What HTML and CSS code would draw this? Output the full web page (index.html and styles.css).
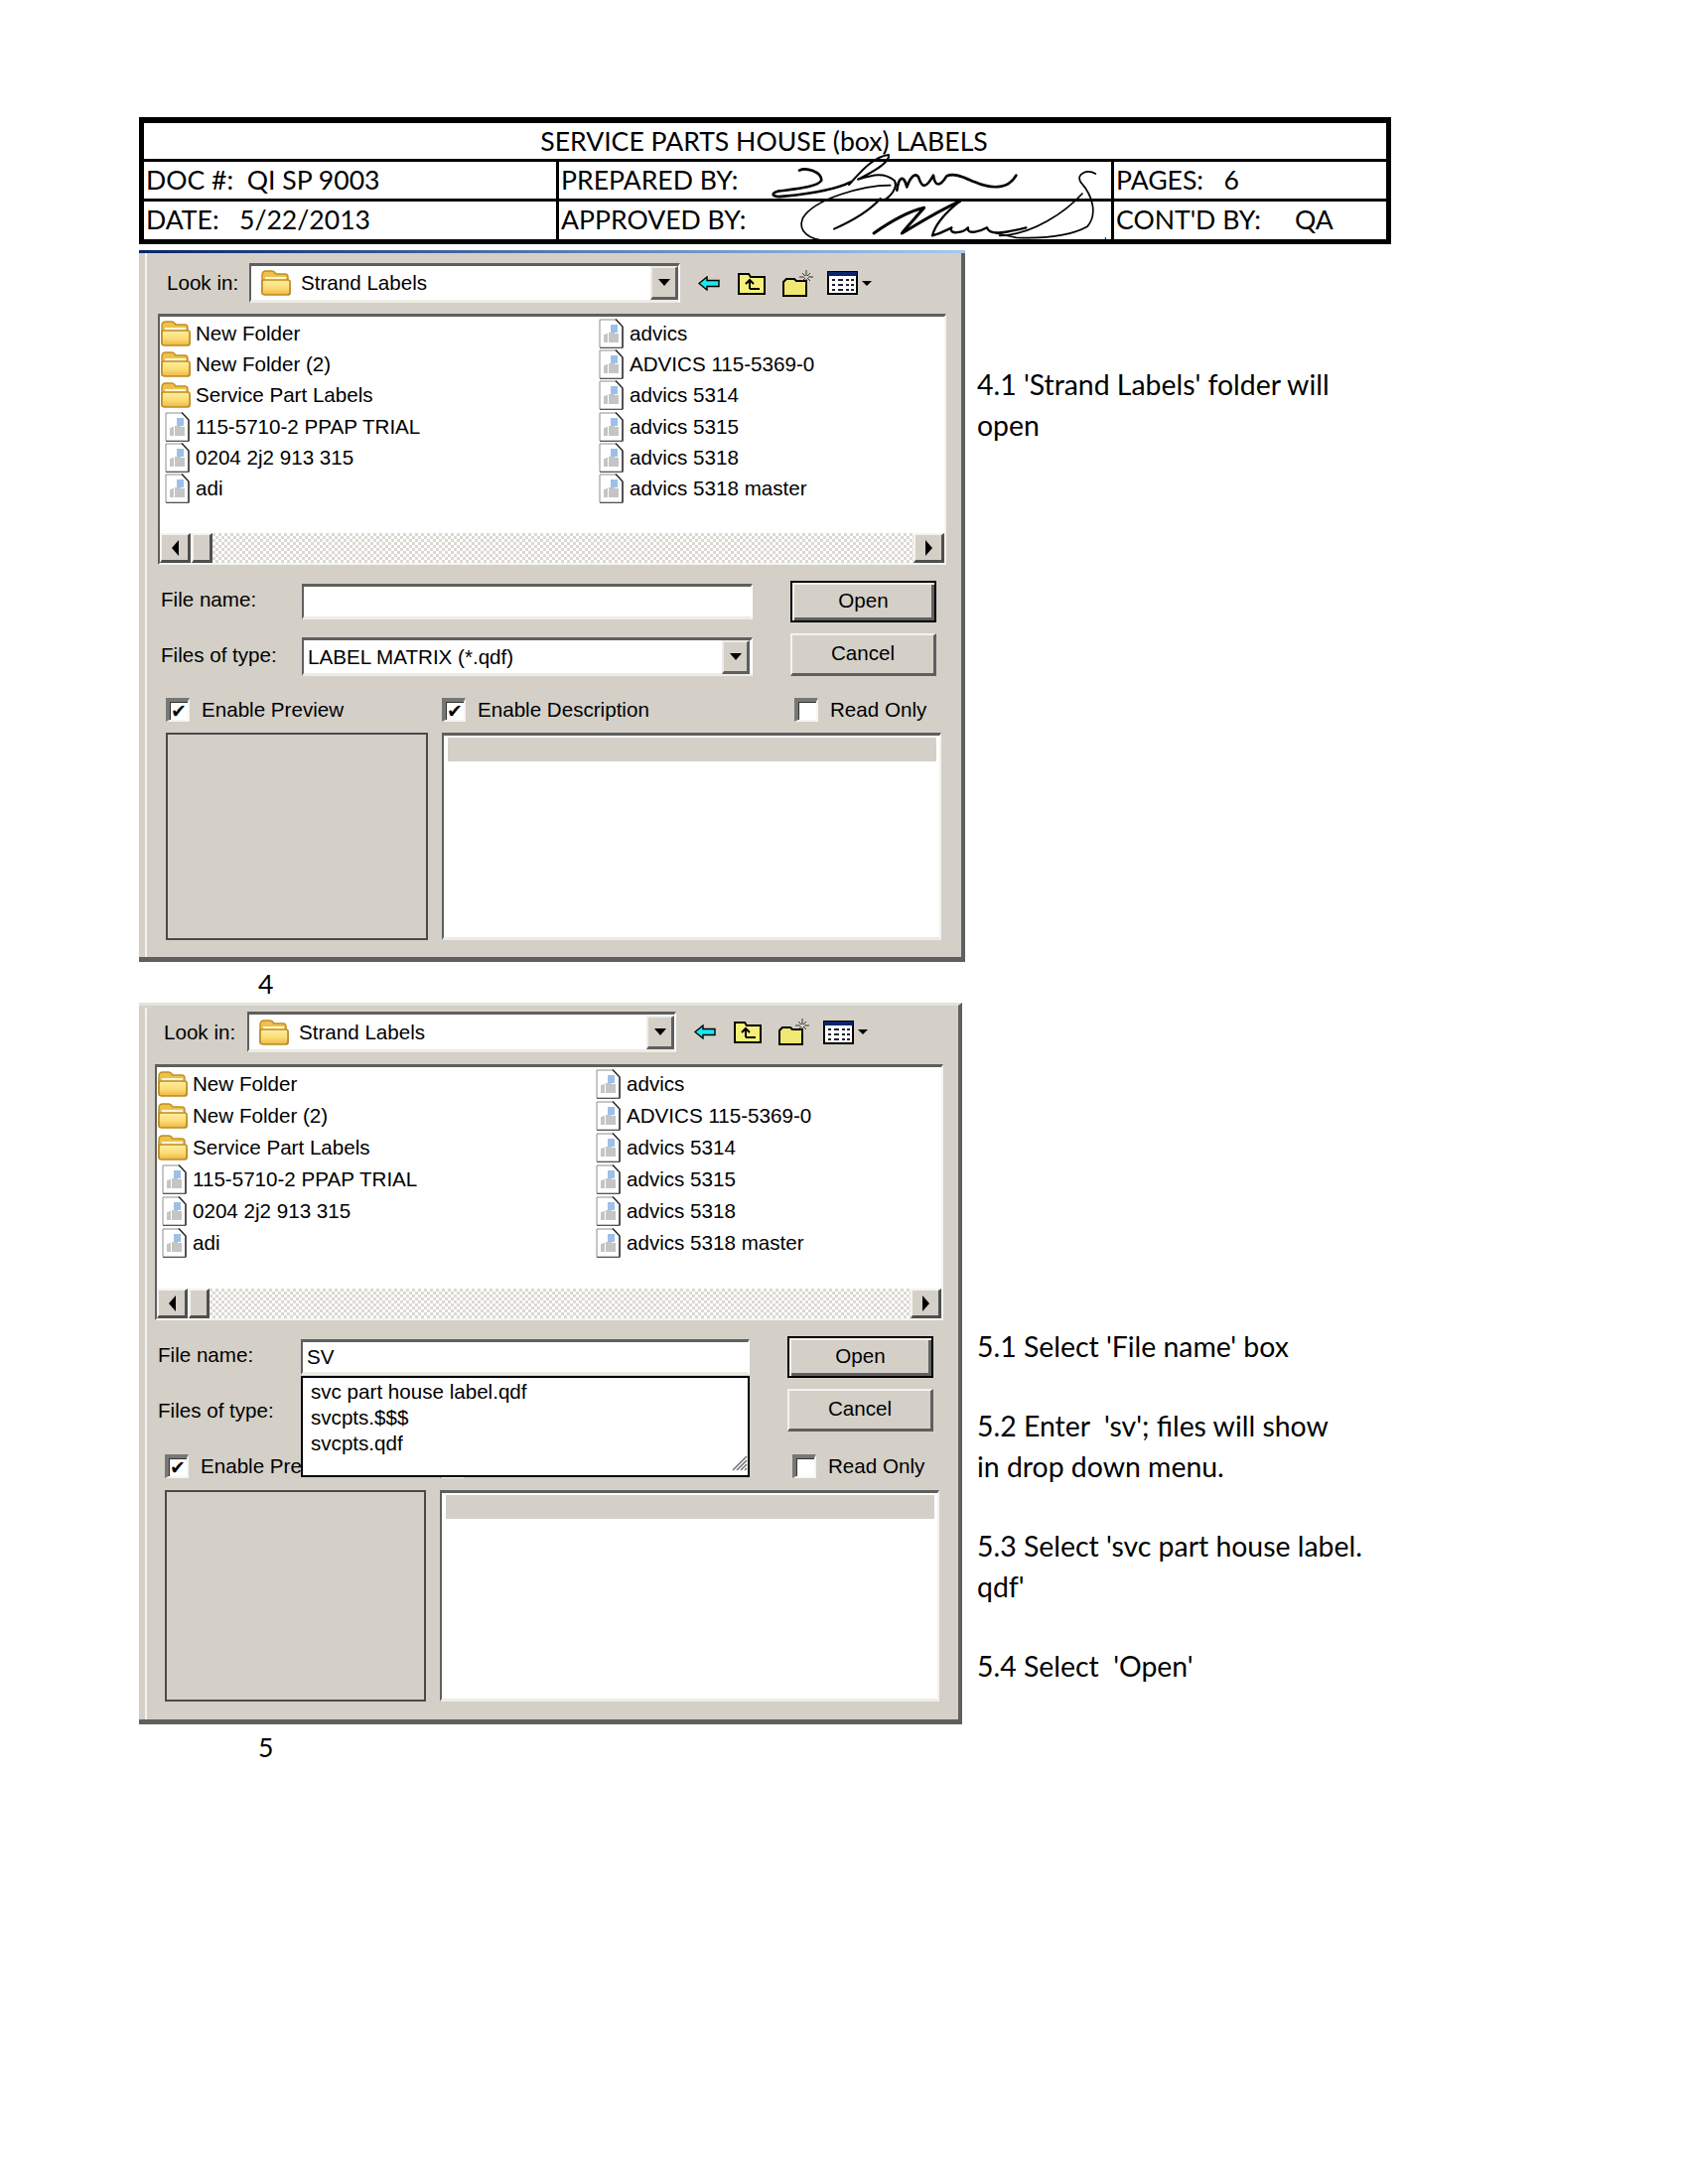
FILE: index.html
```html
<!DOCTYPE html>
<html lang="en">
<head>
<meta charset="utf-8">
<title>Service Parts House (box) Labels</title>
<link rel="stylesheet" href="styles.css">
</head>
<body>
<svg class="defs" width="0" height="0" aria-hidden="true">
  <defs>
    <linearGradient id="fg" x1="0" y1="0" x2="0" y2="1">
      <stop offset="0" stop-color="#ffeea0"/><stop offset="0.55" stop-color="#fbdc74"/><stop offset="1" stop-color="#eeb643"/>
    </linearGradient>
    <symbol id="folder" viewBox="0 0 32 28">
      <path d="M5 27H27Q31 27 31 24V12L28 27Z" fill="#8f8468" opacity="0.7"/>
      <path d="M2 24V6Q2 2 6 2H12Q14 2 16 5H25Q28 5 28 8V12H2Z" fill="#f0c04c" stroke="#c08e22" stroke-width="1.4"/>
      <path d="M5 8H26V12H5Z" fill="#fff8d6"/>
      <path d="M2 24V13Q2 11 4 11H28Q30 11 30 13V23Q30 26 27 26H5Q2 26 2 24Z" fill="url(#fg)" stroke="#bd8a20" stroke-width="1.6"/>
    </symbol>
    <symbol id="doc" viewBox="0 0 25 30">
      <path d="M1 1H17L24 8V29H1Z" fill="#fff" stroke="#8e8e8e" stroke-width="1"/>
      <path d="M17 0.5L24 8V29.5" fill="none" stroke="#222" stroke-width="1.4"/>
      <path d="M1 29.5H24" stroke="#555" stroke-width="1"/>
      <rect x="12" y="6" width="7" height="8" fill="#9cc0e8"/>
      <path d="M6 16v8M8 15v9M11 14v10M13 14v10M15 14v10M17 15v9M19 15v9" stroke="#a6a6a6" stroke-width="1.3"/>
    </symbol>
  </defs>
</svg>

<main class="page">
  <section class="sheet-head">
    <div class="cell cell-title">SERVICE PARTS HOUSE (box) LABELS</div>
    <div class="cell"><span class="doc-value">DOC #:&nbsp; QI SP 9003</span></div>
    <div class="cell">PREPARED BY:</div>
    <div class="cell">PAGES: &nbsp; 6</div>
    <div class="cell">DATE: &nbsp; 5/22/2013</div>
    <div class="cell">APPROVED BY:</div>
    <div class="cell">CONT'D BY: &nbsp; &nbsp; QA</div>
    <svg class="signature" viewBox="0 0 1170 381" aria-hidden="true">
      <g fill="none" stroke="#000" stroke-linecap="round" stroke-linejoin="round">
        <path stroke-width="8" d="M195 155C215 145 262 158 262 185C250 205 190 210 130 218C105 225 115 238 150 233C220 226 300 215 350 190"/>
        <path stroke-width="6" d="M345 198C380 160 420 112 465 108C470 130 420 158 372 182C420 168 450 160 482 185C495 205 470 235 450 245"/>
        <path stroke-width="8" d="M490 215C495 175 510 165 520 205C530 175 545 160 555 175C565 205 575 215 600 170C605 205 620 205 640 172C665 160 700 180 725 190C770 210 825 215 850 170"/>
        <path stroke-width="5" d="M470 200C390 200 240 240 205 300C190 340 225 365 278 368"/>
        <path stroke-width="6" d="M300 332C345 312 400 285 440 240"/>
        <path stroke-width="9" d="M420 345C470 310 520 280 572 268C545 300 515 330 505 345C540 325 600 285 680 248"/>
        <path stroke-width="7" d="M680 248C640 280 605 320 597 352C625 345 640 335 655 328C645 350 690 345 705 328C700 352 745 338 762 328C770 352 810 345 880 328"/>
        <path stroke-width="5" d="M800 352C900 350 1000 280 1050 225"/>
        <path stroke-width="5" d="M1090 165C1065 150 1030 165 1045 190C1085 235 1095 290 1065 325C1020 350 950 362 850 358L790 345"/>
        <path stroke-width="3" d="M1078 370H1120V358"/>
      </g>
    </svg>
  </section>

  <section class="step step-four">
    <div class="dialog">
      <div class="toolbar">
        <span class="look-label">Look in:</span>
        <div class="combo">
          <svg class="combo-icon"><use href="#folder"/></svg>
          <span class="combo-text">Strand Labels</span>
          <span class="drop"><i class="tri-down"></i></span>
        </div>
        <svg class="ic ic-back" viewBox="0 0 22 15"><path d="M1 7.5L9 1V4.5H21V10.5H9V14Z" fill="#19e6f0" stroke="#000" stroke-width="1.4"/></svg>
        <svg class="ic ic-up" viewBox="0 0 28 23"><path d="M1 22V2H11L13 5H27V22Z" fill="#f6f07a" stroke="#000" stroke-width="2"/><path d="M12 17V9M8 12L12 8L16 12M12 17H22" fill="none" stroke="#000" stroke-width="2"/></svg>
        <svg class="ic ic-new" viewBox="0 0 31 27"><path d="M1 26V12L4 9H12L14 11H24V26Z" fill="#f0e873" stroke="#000" stroke-width="2"/><path d="M24 0v6M24 9v6M17 7h5M26 7h5M20 3l3 3M28 3l-3 3M20 11l3-3M28 11l-3-3" stroke="#333" stroke-width="1"/></svg>
        <svg class="ic ic-views" viewBox="0 0 31 24"><rect x="1" y="1" width="29" height="22" fill="#fff" stroke="#000" stroke-width="2"/><rect x="1" y="1" width="29" height="4" fill="#0a246a"/><path d="M5 9h3M11 9h5M19 9h3M24 9h3M5 14h3M11 14h5M19 14h3M24 14h3M5 19h3M11 19h5M19 19h3M24 19h3" stroke="#223" stroke-width="2"/></svg>
        <i class="tri-small"></i>
      </div>
      <div class="list">
        <div class="rows">
          <div class="row"><svg class="f"><use href="#folder"/></svg>New Folder</div>
          <div class="row"><svg class="f"><use href="#folder"/></svg>New Folder (2)</div>
          <div class="row"><svg class="f"><use href="#folder"/></svg>Service Part Labels</div>
          <div class="row"><svg class="d"><use href="#doc"/></svg>115-5710-2 PPAP TRIAL</div>
          <div class="row"><svg class="d"><use href="#doc"/></svg>0204 2j2 913 315</div>
          <div class="row"><svg class="d"><use href="#doc"/></svg>adi</div>
          <div class="row"><svg class="d"><use href="#doc"/></svg>advics</div>
          <div class="row"><svg class="d"><use href="#doc"/></svg>ADVICS 115-5369-0</div>
          <div class="row"><svg class="d"><use href="#doc"/></svg>advics 5314</div>
          <div class="row"><svg class="d"><use href="#doc"/></svg>advics 5315</div>
          <div class="row"><svg class="d"><use href="#doc"/></svg>advics 5318</div>
          <div class="row"><svg class="d"><use href="#doc"/></svg>advics 5318 master</div>
        </div>
        <div class="scrollbar">
          <span class="sb-btn"><i class="tri-left"></i></span><span class="sb-thumb"></span><span class="sb-track"></span><span class="sb-btn"><i class="tri-right"></i></span>
        </div>
      </div>
      <div class="form">
        <span class="form-label form-label-first">File name:</span>
        <div class="field"></div>
        <button class="btn btn-default" type="button">Open</button>
        <span class="form-label">Files of type:</span>
        <div class="field field-combo"><span>LABEL MATRIX (*.qdf)</span><span class="drop"><i class="tri-down"></i></span></div>
        <button class="btn" type="button">Cancel</button>
      </div>
      <div class="checks">
        <label class="check"><i class="box on">✔</i>Enable Preview</label>
        <label class="check"><i class="box on">✔</i>Enable Description</label>
        <label class="check"><i class="box"></i>Read Only</label>
      </div>
      <div class="panels">
        <div class="preview"></div>
        <div class="description"><div class="band"></div></div>
      </div>
    </div>
    <div class="notes">
      <p>4.1 'Strand Labels' folder will<br>open</p>
    </div>
  </section>
  <div class="caption">4</div>

  <section class="step step-five">
    <div class="dialog">
      <div class="toolbar">
        <span class="look-label">Look in:</span>
        <div class="combo">
          <svg class="combo-icon"><use href="#folder"/></svg>
          <span class="combo-text">Strand Labels</span>
          <span class="drop"><i class="tri-down"></i></span>
        </div>
        <svg class="ic ic-back" viewBox="0 0 22 15"><path d="M1 7.5L9 1V4.5H21V10.5H9V14Z" fill="#19e6f0" stroke="#000" stroke-width="1.4"/></svg>
        <svg class="ic ic-up" viewBox="0 0 28 23"><path d="M1 22V2H11L13 5H27V22Z" fill="#f6f07a" stroke="#000" stroke-width="2"/><path d="M12 17V9M8 12L12 8L16 12M12 17H22" fill="none" stroke="#000" stroke-width="2"/></svg>
        <svg class="ic ic-new" viewBox="0 0 31 27"><path d="M1 26V12L4 9H12L14 11H24V26Z" fill="#f0e873" stroke="#000" stroke-width="2"/><path d="M24 0v6M24 9v6M17 7h5M26 7h5M20 3l3 3M28 3l-3 3M20 11l3-3M28 11l-3-3" stroke="#333" stroke-width="1"/></svg>
        <svg class="ic ic-views" viewBox="0 0 31 24"><rect x="1" y="1" width="29" height="22" fill="#fff" stroke="#000" stroke-width="2"/><rect x="1" y="1" width="29" height="4" fill="#0a246a"/><path d="M5 9h3M11 9h5M19 9h3M24 9h3M5 14h3M11 14h5M19 14h3M24 14h3M5 19h3M11 19h5M19 19h3M24 19h3" stroke="#223" stroke-width="2"/></svg>
        <i class="tri-small"></i>
      </div>
      <div class="list">
        <div class="rows">
          <div class="row"><svg class="f"><use href="#folder"/></svg>New Folder</div>
          <div class="row"><svg class="f"><use href="#folder"/></svg>New Folder (2)</div>
          <div class="row"><svg class="f"><use href="#folder"/></svg>Service Part Labels</div>
          <div class="row"><svg class="d"><use href="#doc"/></svg>115-5710-2 PPAP TRIAL</div>
          <div class="row"><svg class="d"><use href="#doc"/></svg>0204 2j2 913 315</div>
          <div class="row"><svg class="d"><use href="#doc"/></svg>adi</div>
          <div class="row"><svg class="d"><use href="#doc"/></svg>advics</div>
          <div class="row"><svg class="d"><use href="#doc"/></svg>ADVICS 115-5369-0</div>
          <div class="row"><svg class="d"><use href="#doc"/></svg>advics 5314</div>
          <div class="row"><svg class="d"><use href="#doc"/></svg>advics 5315</div>
          <div class="row"><svg class="d"><use href="#doc"/></svg>advics 5318</div>
          <div class="row"><svg class="d"><use href="#doc"/></svg>advics 5318 master</div>
        </div>
        <div class="scrollbar">
          <span class="sb-btn"><i class="tri-left"></i></span><span class="sb-thumb"></span><span class="sb-track"></span><span class="sb-btn"><i class="tri-right"></i></span>
        </div>
      </div>
      <div class="form">
        <span class="form-label form-label-first">File name:</span>
        <div class="field"><span>SV</span></div>
        <button class="btn btn-default" type="button">Open</button>
        <span class="form-label">Files of type:</span>
        <div class="field field-combo"><span>LABEL MATRIX (*.qdf)</span><span class="drop"><i class="tri-down"></i></span></div>
        <button class="btn" type="button">Cancel</button>
      </div>
      <div class="checks">
        <label class="check"><i class="box on">✔</i>Enable Preview</label>
        <label class="check"><i class="box on">✔</i>Enable Description</label>
        <label class="check"><i class="box"></i>Read Only</label>
      </div>
      <div class="panels">
        <div class="preview"></div>
        <div class="description"><div class="band"></div></div>
      </div>
      <div class="popup">
        <div>svc part house label.qdf</div>
        <div>svcpts.$$$</div>
        <div>svcpts.qdf</div>
        <svg class="grip" viewBox="0 0 18 18" aria-hidden="true"><path d="M17 3L3 17M17 7L7 17M17 11L11 17M17 15L15 17" stroke="#777" stroke-width="1.6"/></svg>
      </div>
    </div>
    <div class="notes">
      <p>5.1 Select 'File name' box</p>
      <p>5.2 Enter &nbsp;'sv'; files will show<br>in drop down menu.</p>
      <p>5.3 Select 'svc part house label.<br>qdf'</p>
      <p>5.4 Select &nbsp;'Open'</p>
    </div>
  </section>
  <div class="caption">5</div>
</main>
</body>
</html>
```

FILE: styles.css
```css
* { box-sizing: border-box; }
html, body { margin: 0; padding: 0; background: #fff; }
body { font-family: "Liberation Sans", Arial, sans-serif; color: #000; }
.defs { position: absolute; }
.page { width: 1700px; height: 2200px; padding: 118px 0 0 140px; }

/* document header */
.sheet-head {
  position: relative;
  width: 1261px;
  display: grid;
  grid-template-columns: 415px 556px 1fr;
  grid-template-rows: 36px 37px 38px;
  gap: 3px;
  background: #000;
  border: solid #000;
  border-width: 6px 5px 5px 5px;
  font-family: Lato, sans-serif;
  font-size: 26.6px;
  line-height: 36px;
}
.cell { background: #fff; padding-left: 2px; white-space: nowrap; overflow: hidden; }
.cell-title { grid-column: 1 / -1; text-align: center; padding: 0 2px 0 0; }
.signature { position: absolute; left: 595px; top: -4px; width: 390px; height: 127px; }

/* step layout */
.step { display: grid; grid-template-columns: 844px 1fr; }
.step-four { margin-top: 6px; }
.notes { font-family: Lato, sans-serif; font-size: 28.4px; white-space: nowrap; }
.notes p { margin: 0 0 40px; }
.step-four .notes { padding-top: 115px; line-height: 41px; }
.step-five .notes { padding-top: 326px; line-height: 40.4px; }
.caption { height: 41px; font-family: Lato, sans-serif; font-size: 26.6px; line-height: 38px; padding: 3px 0 0 120px; }

/* dialog */
.dialog {
  position: relative;
  background: #d4d0c8;
  border-right: 4px solid #5f5f5f;
  border-bottom: 5px solid #5f5f5f;
  font-size: 20.6px;
  line-height: 24px;
  white-space: nowrap;
}
.dialog::before { content: ""; position: absolute; left: 6px; top: 2px; bottom: 0; width: 2px; background: #f4f3ef; }
.step-four .dialog {
  --pad: 19px; --row: 31.3px; --list: 253px; --combo: 434px; --c1: 145px; --c2: 454px; --indent: 8px; --c3: 278px; --pw: 264px; --ph: 209px; --lbl: 92px; --bar: 40px; --list-gap: 11px; --check-gap: 22px; --panel-gap: 11px;
  width: 832px; height: 717px; padding: 13px 0 0 var(--pad);
}
.step-four .dialog::after {
  content: ""; position: absolute; left: 0; right: -4px; top: 0; height: 3px;
  background: linear-gradient(90deg, #0a246a, #a6caf0);
}
.step-five .dialog {
  --pad: 16px; --row: 32px; --list: 258px; --combo: 432px; --c1: 147px; --c2: 452px; --indent: 10px; --c3: 277px; --pw: 263px; --ph: 213px; --lbl: 93px; --bar: 41px; --list-gap: 12px; --check-gap: 23px; --panel-gap: 12px;
  width: 829px; height: 727px; padding: 9px 0 0 var(--pad);
  border-top: 3px solid #e4e2dc;
}
.step-five .toolbar { margin-top: -3px; }

.toolbar { display: flex; align-items: center; height: var(--bar); position: relative; z-index: 1; }
.look-label { width: var(--lbl); padding-left: 9px; }
.combo {
  flex: none; width: var(--combo); height: var(--bar); background: #fff; display: flex; align-items: center;
  border: solid; border-width: 3px 2px 3px 2px; border-color: #5f5f5f #fff #eeece6 #5f5f5f;
}
.combo-icon { width: 32px; height: 28px; margin-left: 9px; }
.combo-text { margin-left: 9px; flex: 1; }
.drop {
  display: flex; align-items: center; justify-content: center;
  width: 28px; height: 34px; background: #d4d0c8;
  border: solid; border-width: 2px 3px 3px 2px; border-color: #eeece6 #5f5f5f #5f5f5f #eeece6;
}
.tri-down { border: solid transparent; border-width: 7px 6px 0; border-top-color: #000; }
.tri-left { border: solid transparent; border-width: 8px 7px 8px 0; border-right-color: #000; }
.tri-right { border: solid transparent; border-width: 8px 0 8px 7px; border-left-color: #000; }
.tri-small { border: solid transparent; border-width: 5px 5px 0; border-top-color: #000; margin-left: 4px; }
.ic { flex: none; }
.ic-back { width: 22px; height: 15px; margin-left: 18px; }
.ic-up { width: 28px; height: 23px; margin-left: 18px; }
.ic-new { width: 31px; height: 27px; margin-left: 17px; }
.ic-views { width: 31px; height: 24px; margin-left: 14px; }

.list {
  margin-top: var(--list-gap); width: 794px; height: var(--list);
  display: flex; flex-direction: column; background: #fff;
  border: solid; border-width: 3px 2px 2px 2px; border-color: #5f5f5f #f4f3ef #f4f3ef #5f5f5f;
}
.rows {
  flex: 1; padding-top: 1px;
  display: grid; grid-auto-flow: column;
  grid-template-rows: repeat(6, var(--row));
  grid-template-columns: 437px 1fr;
}
.row { display: flex; align-items: center; }
.f { width: 32px; height: 28px; margin-right: 4px; flex: none; }
.d { width: 25px; height: 30px; margin: 0 6px 0 5px; flex: none; }
.scrollbar { display: flex; height: 30px; }
.sb-btn, .sb-thumb {
  background: #d4d0c8; border: solid; border-width: 2px 3px 3px 2px; border-color: #f4f3ef #4f4f4f #4f4f4f #f4f3ef;
  display: flex; align-items: center; justify-content: center;
}
.sb-btn { width: 31px; flex: none; }
.sb-thumb { width: 21px; margin-left: 1px; flex: none; }
.sb-track { flex: 1; background: repeating-conic-gradient(#fff 0 25%, #dcd9d3 0 50%) 0 0 / 6px 6px; }

.form {
  margin-top: 16px; display: grid;
  grid-template-columns: var(--c1) var(--c2) 38px 147px;
  grid-template-rows: 42px 43px; row-gap: 11px;
}
.form-label { grid-column: 1; padding-left: 3px; align-self: center; }
.form-label-first { margin-top: -4px; }
.field {
  grid-column: 2; height: 36px; align-self: center; background: #fff;
  display: flex; align-items: center; justify-content: space-between;
  padding-left: 4px;
  border: solid; border-width: 3px 2px 3px 2px; border-color: #5f5f5f #fff #eeece6 #5f5f5f;
}
.field-combo { height: 39px; align-self: end; padding-right: 1px; }
.btn {
  grid-column: 4; margin: 0; padding: 0 0 2px; background: #d4d0c8; color: #000;
  font: inherit; border: solid; border-width: 2px 3px 3px 2px; border-color: #f4f3ef #5f5f5f #5f5f5f #f4f3ef;
}
.btn-default { border: 2px solid #000; box-shadow: inset 2px 2px #f4f3ef, inset -3px -3px #5f5f5f; }

.checks {
  margin-top: var(--check-gap); height: 24px; padding-left: var(--indent);
  display: grid; grid-template-columns: var(--c3) 355px 1fr;
}
.check { display: flex; align-items: center; }
.box {
  width: 24px; height: 24px; margin-right: 12px; background: #fff; flex: none;
  font-style: normal; font-weight: bold; font-size: 19px; line-height: 18px; text-align: center;
  border: solid; border-width: 4px 2px 2px 4px; border-color: #777 #f6f5f2 #f6f5f2 #777;
  box-shadow: inset 1px 1px #333;
  font-family: "DejaVu Sans", sans-serif; overflow: hidden;
}
.panels {
  margin-top: var(--panel-gap); padding-left: var(--indent);
  display: flex; gap: 14px; height: var(--ph);
}
.preview { width: var(--pw); border: 2px solid #4a4a4a; }
.description {
  width: 503px; background: #fff; padding: 2px 3px 0 4px;
  border: solid; border-width: 3px 2px 3px 2px; border-color: #5f5f5f #f4f3ef #eeece6 #5f5f5f;
}
.band { height: 24px; background: #d4d0c8; }

.popup {
  position: absolute; left: 163px; top: 373px; width: 452px; height: 102px;
  background: #fff; border: 2px solid #000; padding: 1px 0 0 8px; z-index: 2;
  line-height: 26px;
}
.grip { position: absolute; right: 0; bottom: 0; width: 18px; height: 26px; }
```
